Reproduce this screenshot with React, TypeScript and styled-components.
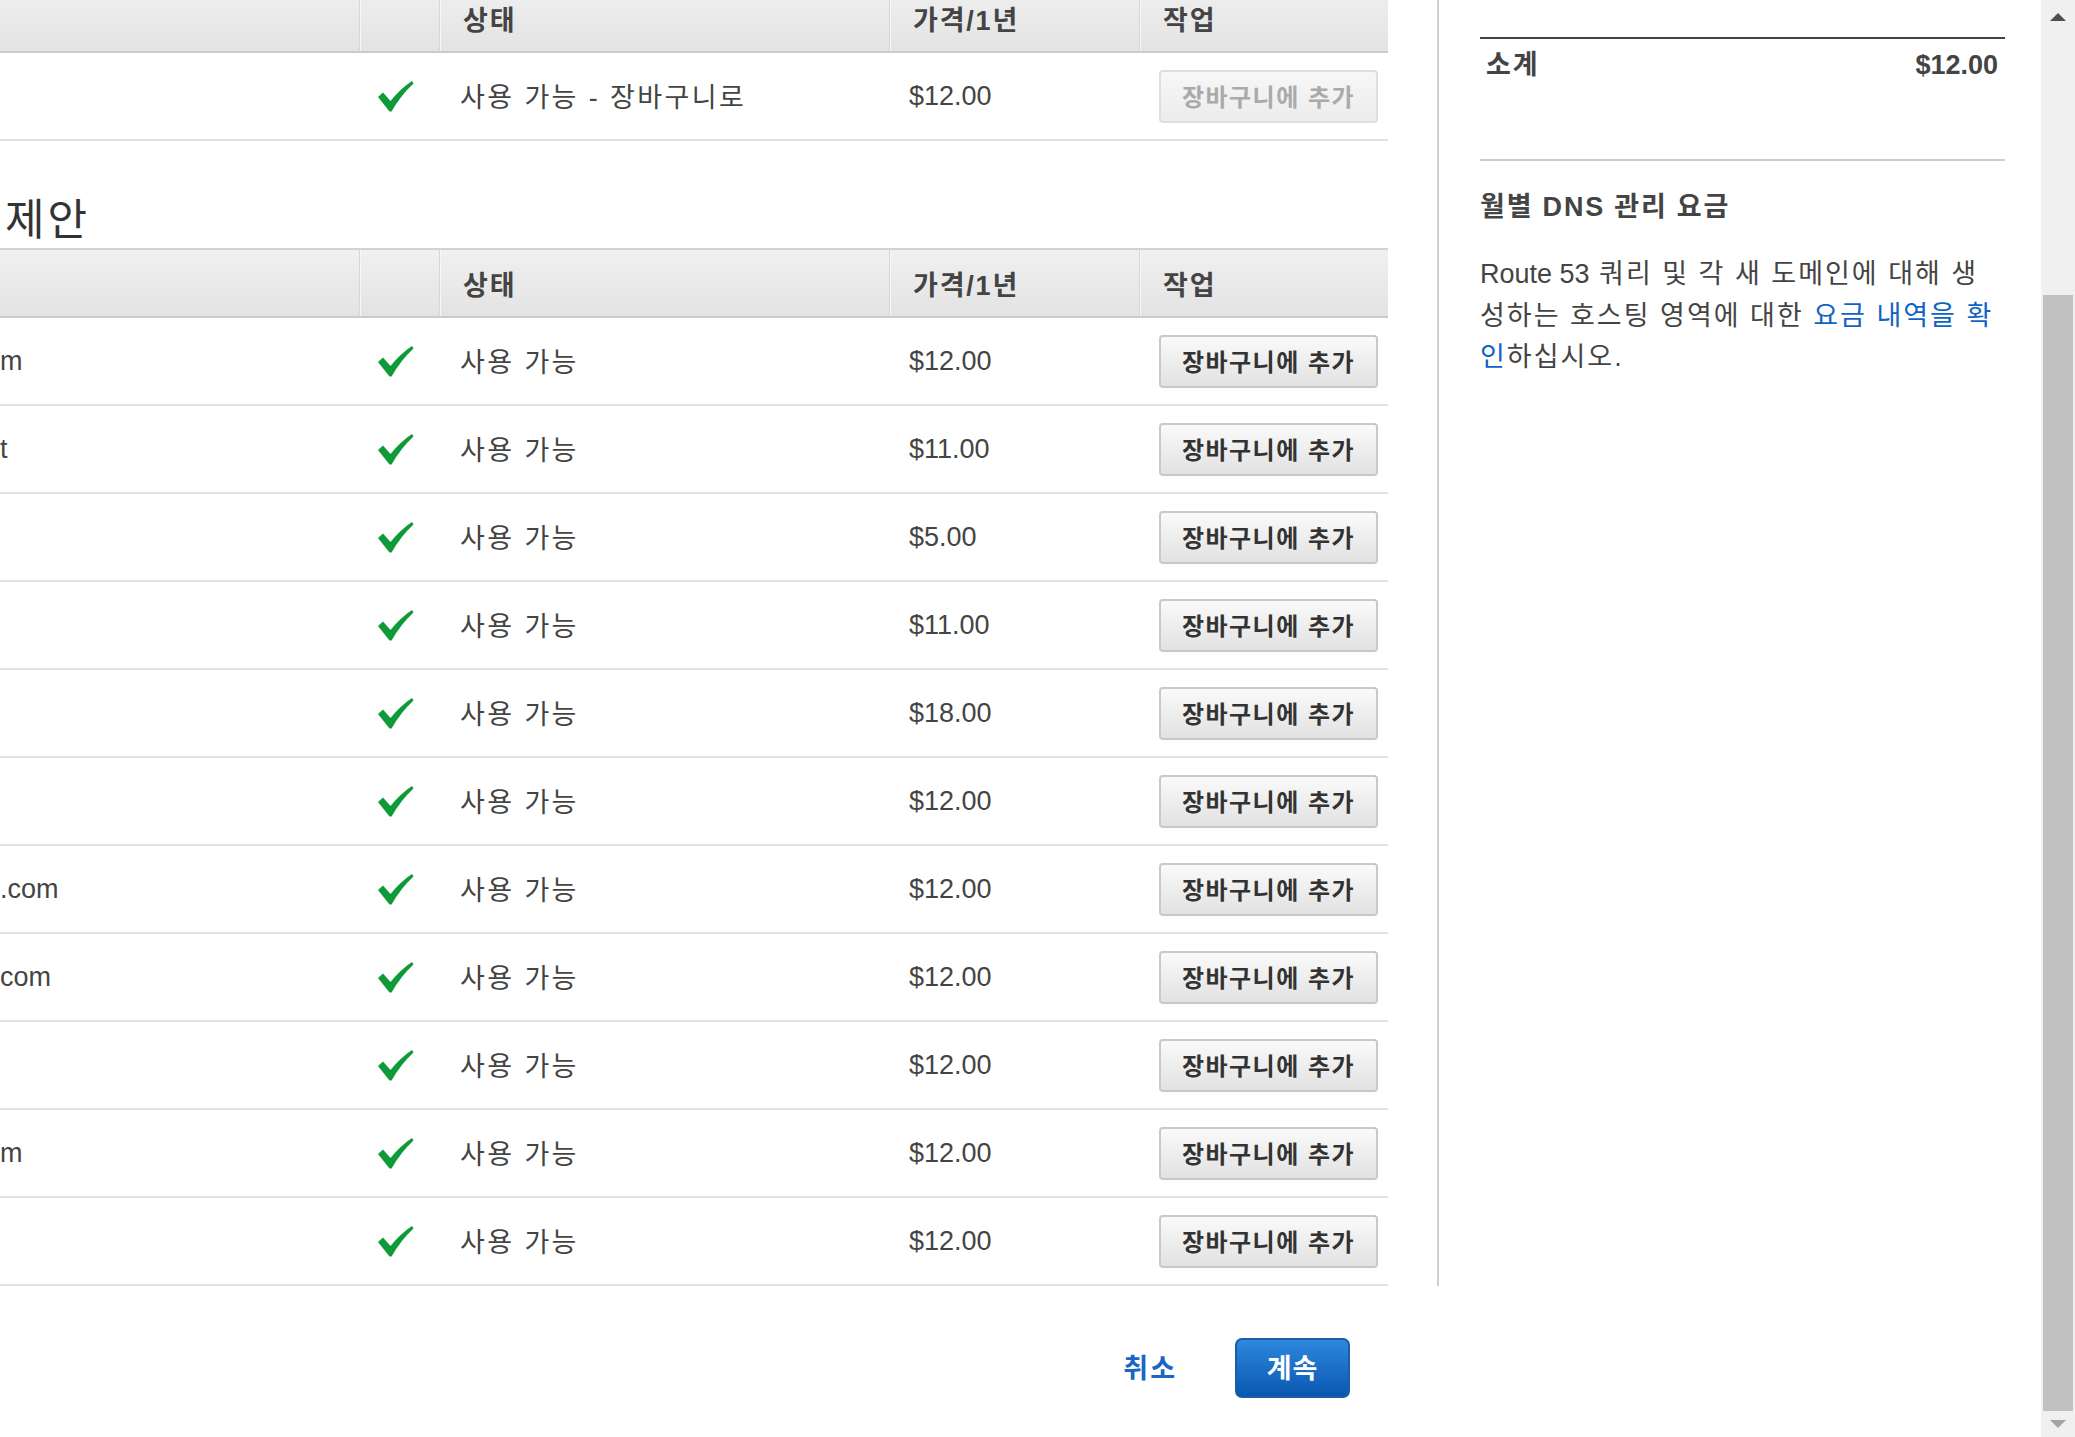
import React from "react";
import styled, { createGlobalStyle } from "styled-components";

const GlobalStyle = createGlobalStyle`
    html, body {
        margin: 0;
        padding: 0;
        height: 100%;
        overflow: hidden;
        background: #fff;
    }
    body {
        font-family: "Liberation Sans", "Noto Sans CJK KR", sans-serif;
        color: #444;
    }
`

const Screen = styled.div`
    display: flex;
    height: 100vh;
    overflow: hidden;
`

const Main = styled.div`
    flex: 1;
    overflow: hidden;
`

const Scrolled = styled.div`
    margin-top: -17px;
`

const Columns = styled.div`
    display: flex;
    align-items: stretch;
    gap: 49px;
`

const LeftColumn = styled.div`
    width: 1388px;
    flex-shrink: 0;
`

const Table = styled.div`
    display: grid;
    grid-template-columns: 359px 80px 450px 250px 249px;
`

const HeadCell = styled.div<{ $divider?: boolean }>`
    height: 66px;
    display: flex;
    align-items: center;
    padding-left: 23px;
    font-size: 27px;
    font-weight: bold;
    letter-spacing: 1.8px;
    color: #444;
    background: linear-gradient(#f0f0f0, #e3e3e3);
    border-top: 2px solid #d2d2d2;
    border-bottom: 2px solid #cbcbcb;
    border-left: ${p => p.$divider ? "1px solid #d6d6d6" : "none"};
    box-shadow: ${p => p.$divider ? "inset 1px 0 0 #f7f7f7" : "none"};
`

const Cell = styled.div<{ $pad?: number }>`
    height: 86px;
    display: flex;
    align-items: center;
    padding-left: ${p => p.$pad ?? 21}px;
    border-bottom: 2px solid #e1e1e1;
    font-size: 27px;
    color: #444;
    white-space: nowrap;
    overflow: hidden;
`

const CheckCell = styled(Cell)`
    padding-left: 19px;
`

const Status = styled.span`
    letter-spacing: 2.4px;
    margin-top: -2px;
`

const CartButton = styled.button<{ $disabled?: boolean }>`
    width: 219px;
    height: 53px;
    padding: 0 0 2px;
    font-family: inherit;
    font-size: 24px;
    font-weight: bold;
    letter-spacing: 1.5px;
    color: ${p => p.$disabled ? "#aaa" : "#333"};
    background: ${p => p.$disabled
        ? "linear-gradient(#f7f7f7, #ececec)"
        : "linear-gradient(#fafafa, #e2e2e2)"};
    border: 2px solid ${p => p.$disabled ? "#dedede" : "#c9c9c9"};
    border-radius: 4px;
    cursor: ${p => p.$disabled ? "default" : "pointer"};
`

const Heading = styled.h2`
    margin: 54px 0 3px;
    padding-left: 5px;
    font-size: 43px;
    line-height: 50px;
    font-weight: normal;
    letter-spacing: 3px;
    color: #333;
`

const Sidebar = styled.aside`
    flex: 0 0 525px;
    border-left: 2px solid #cfcfcf;
    padding-left: 41px;
    padding-top: 54px;
`

const Summary = styled.div`
    border-top: 2px solid #444;
    border-bottom: 2px solid #cccccc;
    padding: 10px 7px 78px 6px;
    display: flex;
    justify-content: space-between;
    font-size: 27px;
    line-height: 32px;
    font-weight: bold;
    color: #444;
`

const Subtitle = styled.span`
    letter-spacing: 2px;
`

const SideTitle = styled.h3`
    margin: 30px 0 0;
    font-size: 27px;
    line-height: 32px;
    font-weight: bold;
    letter-spacing: 1.8px;
    color: #444;
`

const SideText = styled.p`
    margin: 31px 0 0;
    width: 517px;
    font-size: 27px;
    line-height: 41.5px;
    letter-spacing: 2px;
    color: #444;
`

const Latin = styled.span`
    letter-spacing: 0;
`

const Link = styled.a`
    color: #0f63c4;
    text-decoration: none;
`

const Footer = styled.div`
    width: 1388px;
    display: flex;
    justify-content: flex-end;
    align-items: center;
    gap: 58px;
    padding-right: 38px;
    box-sizing: border-box;
    margin-top: 52px;
`

const CancelLink = styled.a`
    font-size: 27px;
    font-weight: bold;
    letter-spacing: 2px;
    color: #1a66c0;
    margin-top: -4px;
`

const PrimaryButton = styled.button`
    width: 115px;
    height: 60px;
    padding: 0 0 4px;
    font-family: inherit;
    font-size: 27px;
    font-weight: bold;
    letter-spacing: 1px;
    color: #fff;
    background: linear-gradient(#2f87de, #0957b0);
    border: 2px solid #1a5da8;
    border-radius: 7px;
    cursor: pointer;
`

const ScrollTrack = styled.div`
    width: 34px;
    flex-shrink: 0;
    background: #f0f0f0;
    display: flex;
    flex-direction: column;
`

const ArrowBox = styled.div<{ $h: number }>`
    height: ${p => p.$h}px;
    display: flex;
    align-items: center;
    justify-content: center;
    flex-shrink: 0;
`

const TrackGap = styled.div`
    height: 261px;
    flex-shrink: 0;
`

const Thumb = styled.div`
    flex: 1;
    margin: 0 2px;
    background: #c1c1c1;
`

const Arrow = styled.div<{ $down?: boolean }>`
    width: 0;
    height: 0;
    border-left: 8px solid transparent;
    border-right: 8px solid transparent;
    ${p => p.$down
        ? "border-top: 8px solid #a3a3a3;"
        : "border-bottom: 8px solid #4f4f4f;"}
`

function Check() {
    return (
        <svg width="36" height="31" viewBox="0 0 36 31">
            <path d="M0 16 L5 11.5 L12.5 20 Q22 8 34 0 L35.5 2.5 Q23 14 13.5 30.5 L11.5 30.5 Z" fill="#0e9a38" />
        </svg>
    )
}

type Row = { name: string, status: string, price: string, disabled?: boolean }

const inCart: Row[] = [
    { name: "", status: "사용 가능 - 장바구니로", price: "$12.00", disabled: true },
]

const suggestions: Row[] = [
    { name: "m", status: "사용 가능", price: "$12.00" },
    { name: "t", status: "사용 가능", price: "$11.00" },
    { name: "", status: "사용 가능", price: "$5.00" },
    { name: "", status: "사용 가능", price: "$11.00" },
    { name: "", status: "사용 가능", price: "$18.00" },
    { name: "", status: "사용 가능", price: "$12.00" },
    { name: ".com", status: "사용 가능", price: "$12.00" },
    { name: "com", status: "사용 가능", price: "$12.00" },
    { name: "", status: "사용 가능", price: "$12.00" },
    { name: "m", status: "사용 가능", price: "$12.00" },
    { name: "", status: "사용 가능", price: "$12.00" },
]

function DomainTable({ rows }: { rows: Row[] }) {
    return (
        <Table>
            <HeadCell></HeadCell>
            <HeadCell $divider></HeadCell>
            <HeadCell $divider>상태</HeadCell>
            <HeadCell $divider>가격/1년</HeadCell>
            <HeadCell $divider>작업</HeadCell>
            {rows.map((r, i) => (
                <React.Fragment key={i}>
                    <Cell $pad={0}>{r.name}</Cell>
                    <CheckCell><Check /></CheckCell>
                    <Cell><Status>{r.status}</Status></Cell>
                    <Cell $pad={20}>{r.price}</Cell>
                    <Cell $pad={20}>
                        <CartButton $disabled={r.disabled}>장바구니에 추가</CartButton>
                    </Cell>
                </React.Fragment>
            ))}
        </Table>
    )
}

export default function App() {
    return (
        <>
            <GlobalStyle />
            <Screen>
                <Main>
                    <Scrolled>
                        <Columns>
                            <LeftColumn>
                                <DomainTable rows={inCart} />
                                <Heading>제안</Heading>
                                <DomainTable rows={suggestions} />
                            </LeftColumn>
                            <Sidebar>
                                <Summary>
                                    <Subtitle>소계</Subtitle>
                                    <span>$12.00</span>
                                </Summary>
                                <SideTitle>월별 DNS 관리 요금</SideTitle>
                                <SideText>
                                    <Latin>Route 53</Latin> 쿼리 및 각 새 도메인에 대해 생성하는 호스팅 영역에 대한 <Link href="#">요금 내역을 확인</Link>하십시오.
                                </SideText>
                            </Sidebar>
                        </Columns>
                        <Footer>
                            <CancelLink>취소</CancelLink>
                            <PrimaryButton>계속</PrimaryButton>
                        </Footer>
                    </Scrolled>
                </Main>
                <ScrollTrack>
                    <ArrowBox $h={34}><Arrow /></ArrowBox>
                    <TrackGap />
                    <Thumb />
                    <ArrowBox $h={26}><Arrow $down /></ArrowBox>
                </ScrollTrack>
            </Screen>
        </>
    )
}
